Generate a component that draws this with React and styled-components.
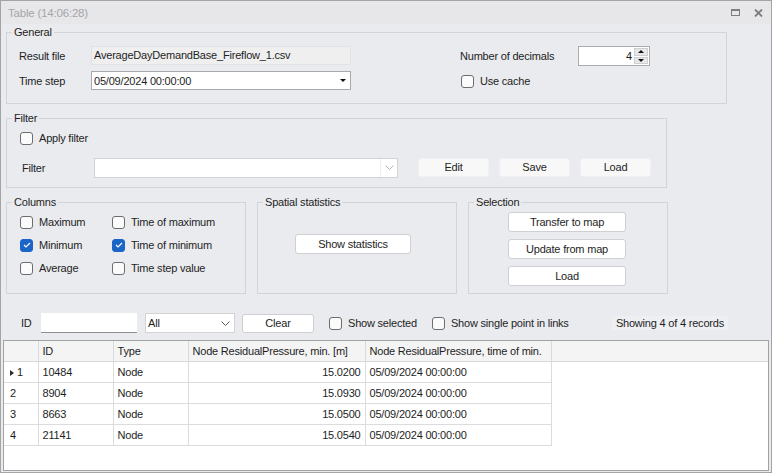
import React from 'react';
import styled, { createGlobalStyle } from 'styled-components';

const GlobalStyle = createGlobalStyle`
  body {
    margin: 0;
    background: #ffffff;
  }
  * {
    box-sizing: border-box;
  }
`;

const Window = styled.div`
  width: 772px;
  height: 473px;
  border: 1px solid #a4a4a7;
  background: #eaebef;
  display: flex;
  flex-direction: column;
  font-family: "Liberation Sans", Arial, sans-serif;
  font-size: 11px;
  letter-spacing: -0.2px;
  color: #1e1e1e;
  overflow: hidden;
`;

const TitleBar = styled.div`
  height: 23px;
  flex: none;
  display: flex;
  align-items: center;
  justify-content: space-between;
  padding: 0 8px 0 7px;
  background: #e7e7ea;
  color: #a5a5a8;
  font-size: 11.5px;
`;

const TitleIcons = styled.div`
  display: flex;
  align-items: center;
  gap: 14px;
`;

const Body = styled.div`
  display: flex;
  flex-direction: column;
  padding: 0 5px;
  margin-top: 1px;
`;

const Group = styled.fieldset`
  margin: 0;
  min-width: 0;
  border: 1px solid #d3d4d8;
  padding: ${p => p.$pt || 0}px 0 ${p => p.$pb || 0}px 0;
  width: ${p => p.$w}px;
  margin-top: ${p => p.$mt || 0}px;
  display: flex;
  flex-direction: column;
`;

const Legend = styled.legend`
  padding: 0 2px;
  margin-left: 5px;
  line-height: 14px;
  color: #1e1e1e;
`;

const GeneralContent = styled.div`
  display: flex;
  padding-left: 12px;
`;

const FieldGrid = styled.div`
  display: grid;
  grid-template-columns: ${p => p.$cols};
  grid-auto-rows: ${p => p.$rows};
  row-gap: ${p => p.$gap}px;
  align-items: center;
  margin-left: ${p => p.$ml || 0}px;
`;

const Label = styled.span`
  white-space: nowrap;
`;

const ReadField = styled.div`
  height: 19px;
  background: #efeff0;
  border: 1px solid #e2e2e4;
  padding-left: 2px;
  line-height: 17px;
`;

const Combo = styled.div`
  height: ${p => p.$h || 20}px;
  width: ${p => p.$w ? `${p.$w}px` : 'auto'};
  background: #ffffff;
  border: 1px solid ${p => p.$dark ? '#a9a9ac' : '#d3d3d6'};
  display: flex;
  align-items: center;
  justify-content: space-between;
  padding-left: 2px;
  margin-left: ${p => p.$ml || 0}px;
  margin-right: ${p => p.$mr || 0}px;
  flex: none;
`;

const ComboButton = styled.div`
  width: ${p => p.$w}px;
  align-self: stretch;
  display: flex;
  align-items: center;
  justify-content: center;
  border-left: ${p => p.$sep ? '1px solid #efeff1' : 'none'};
`;

const Spinner = styled.div`
  width: 72px;
  height: 20px;
  border: 1px solid #acacaf;
  background: #ffffff;
  display: flex;
`;

const SpinValue = styled.div`
  flex: 1;
  text-align: right;
  padding-right: 2px;
  line-height: 18px;
`;

const SpinButtons = styled.div`
  width: 14px;
  margin: 1px 1px 1px 0;
  display: flex;
  flex-direction: column;
  gap: 1px;
`;

const SpinHalf = styled.div`
  flex: 1;
  background: #e8e8ea;
  border: 1px solid #cfcfd2;
  display: flex;
  align-items: center;
  justify-content: center;
`;

const Arrow = styled.span`
  width: 0;
  height: 0;
  border-left: 3px solid transparent;
  border-right: 3px solid transparent;
  ${p => p.$up ? 'border-bottom: 3px solid #111;' : 'border-top: 3px solid #111;'}
`;

const CheckRow = styled.label`
  display: flex;
  align-items: center;
  gap: 6px;
  height: 16px;
  margin-left: ${p => p.$ml || 0}px;
  grid-column: ${p => p.$span ? '1 / -1' : 'auto'};
  white-space: nowrap;
`;

const Box = styled.span`
  width: 13px;
  height: 13px;
  flex: none;
  border-radius: 3px;
  border: 1px solid ${p => p.$checked ? '#1b64c8' : '#6d6d70'};
  background: ${p => p.$checked ? '#1b64c8' : '#fbfbfc'};
  display: inline-flex;
  align-items: center;
  justify-content: center;
`;

const FilterContent = styled.div`
  padding-left: 13px;
`;

const FilterRow = styled.div`
  display: flex;
  align-items: center;
  height: 21px;
  margin-top: 11px;
`;

const RowLabel = styled.span`
  width: ${p => p.$w}px;
  margin-left: ${p => p.$ml || 0}px;
  flex: none;
`;

const FlatButton = styled.div`
  width: 71px;
  height: 19px;
  margin-right: 10px;
  background: #f8f8f9;
  border: 1px solid #f1f1f3;
  border-radius: 3px;
  text-align: center;
  line-height: 17px;
`;

const Button = styled.div`
  width: ${p => p.$w}px;
  height: ${p => p.$h || 20}px;
  background: #ffffff;
  border: 1px solid #cfcfd3;
  border-radius: 3px;
  text-align: center;
  line-height: ${p => (p.$h || 20) - 2}px;
  margin-left: ${p => p.$ml || 0}px;
  flex: none;
`;

const GroupRow = styled.div`
  display: flex;
  gap: 11px;
  margin-top: 7px;
  align-items: stretch;
`;

const ChecksGrid = styled.div`
  display: grid;
  grid-template-columns: 92px auto;
  grid-auto-rows: 16px;
  row-gap: 7px;
  padding: 5px 0 0 13px;
`;

const StatsContent = styled.div`
  padding: 25px 0 0 37px;
`;

const SelectionContent = styled.div`
  display: flex;
  flex-direction: column;
  align-items: flex-start;
  gap: 7px;
  padding-left: 39px;
`;

const Toolbar = styled.div`
  display: flex;
  align-items: center;
  height: 20px;
  margin-top: 19px;
  padding-left: 15px;
`;

const IdInput = styled.div`
  width: 96px;
  height: 20px;
  background: #ffffff;
  border-bottom: 1px solid #8e8e91;
  flex: none;
`;

const Status = styled.div`
  margin-left: auto;
  margin-right: 38px;
  padding: 1px 4px;
  background: #eeeff2;
`;

const Grid = styled.div`
  flex: 1;
  margin: 7px 2px 1px 2px;
  border: 1px solid #a2a2a5;
  background: #ffffff;
  overflow: hidden;
`;

const Table = styled.table`
  width: 100%;
  border-collapse: collapse;
  table-layout: fixed;
`;

const Th = styled.th`
  height: 20px;
  padding: 0 4px;
  background: #f4f4f5;
  border-bottom: 1px solid #d9d9dc;
  border-right: ${p => p.$filler ? 'none' : '1px solid #d9d9dc'};
  font-weight: normal;
  text-align: left;
  white-space: nowrap;
  overflow: hidden;
`;

const Td = styled.td`
  height: 21px;
  padding: ${p => p.$ind ? '0 4px 0 6px' : '0 4px'};
  border-bottom: ${p => p.$filler ? 'none' : '1px solid #dcdcdf'};
  border-right: ${p => p.$filler ? 'none' : '1px solid #dcdcdf'};
  text-align: ${p => p.$right ? 'right' : 'left'};
  white-space: nowrap;
`;

const Pointer = styled.span`
  display: inline-block;
  width: 0;
  height: 0;
  border-top: 3.5px solid transparent;
  border-bottom: 3.5px solid transparent;
  border-left: 4px solid #2a2a2a;
  margin-right: 3px;
  vertical-align: -0.5px;
`;

const Checkbox = ({ checked, label, ml, span }) => (
  <CheckRow $ml={ml} $span={span}>
    <Box $checked={checked}>
      {checked && (
        <svg width="8" height="6" viewBox="0 0 8 6">
          <polyline points="1,3 3,5 7,1" fill="none" stroke="#ffffff" strokeWidth="1.2" />
        </svg>
      )}
    </Box>
    {label}
  </CheckRow>
);

const Chevron = ({ color = '#9a9a9d' }) => (
  <svg width="9" height="5" viewBox="0 0 9 5">
    <polyline points="0.5,0.5 4.5,4.5 8.5,0.5" fill="none" stroke={color} strokeWidth="1" />
  </svg>
);

const rows = [
  { n: 1, id: '10484', v: '15.0200' },
  { n: 2, id: '8904', v: '15.0930' },
  { n: 3, id: '8663', v: '15.0500' },
  { n: 4, id: '21141', v: '15.0540' },
];

export default function App() {
  return (
    <>
      <GlobalStyle />
      <Window>
        <TitleBar>
          <span>Table (14:06:28)</span>
          <TitleIcons>
            <svg width="9" height="7" viewBox="0 0 9 7">
              <rect x="0.5" y="1" width="8" height="5.5" fill="none" stroke="#7d7d80" strokeWidth="1" />
              <rect x="0" y="0" width="9" height="2" fill="#7d7d80" />
            </svg>
            <svg width="9" height="8" viewBox="0 0 9 8">
              <path d="M1 0.5 L8 7.5 M8 0.5 L1 7.5" stroke="#7d7d80" strokeWidth="1.8" />
            </svg>
          </TitleIcons>
        </TitleBar>

        <Body>
          <Group $w={721} $pt={7} $pb={12}>
            <Legend>General</Legend>
            <GeneralContent>
              <FieldGrid $cols="72px 260px" $rows="19px" $gap={6}>
                <Label>Result file</Label>
                <ReadField>AverageDayDemandBase_Fireflow_1.csv</ReadField>
                <Label>Time step</Label>
                <Combo $h={19} $dark>
                  05/09/2024 00:00:00
                  <ComboButton $w={14}>
                    <Arrow />
                  </ComboButton>
                </Combo>
              </FieldGrid>
              <FieldGrid $cols="118px 72px" $rows="20px" $gap={5} $ml={109}>
                <Label>Number of decimals</Label>
                <Spinner>
                  <SpinValue>4</SpinValue>
                  <SpinButtons>
                    <SpinHalf><Arrow $up /></SpinHalf>
                    <SpinHalf><Arrow /></SpinHalf>
                  </SpinButtons>
                </Spinner>
                <Checkbox label="Use cache" ml={1} span />
              </FieldGrid>
            </GeneralContent>
          </Group>

          <Group $w={661} $pt={5} $pb={9} $mt={7}>
            <Legend>Filter</Legend>
            <FilterContent>
              <Checkbox label="Apply filter" />
              <FilterRow>
                <RowLabel $w={72} $ml={2}>Filter</RowLabel>
                <Combo $w={304} $mr={20}>
                  <span />
                  <ComboButton $w={17} $sep>
                    <Chevron color="#b5b5b8" />
                  </ComboButton>
                </Combo>
                <FlatButton>Edit</FlatButton>
                <FlatButton>Save</FlatButton>
                <FlatButton>Load</FlatButton>
              </FilterRow>
            </FilterContent>
          </Group>

          <GroupRow>
            <Group $w={240}>
              <Legend>Columns</Legend>
              <ChecksGrid>
                <Checkbox label="Maximum" />
                <Checkbox label="Time of maximum" />
                <Checkbox label="Minimum" checked />
                <Checkbox label="Time of minimum" checked />
                <Checkbox label="Average" />
                <Checkbox label="Time step value" />
              </ChecksGrid>
            </Group>
            <Group $w={200}>
              <Legend>Spatial statistics</Legend>
              <StatsContent>
                <Button $w={116}>Show statistics</Button>
              </StatsContent>
            </Group>
            <Group $w={200} $pt={3} $pb={7}>
              <Legend>Selection</Legend>
              <SelectionContent>
                <Button $w={118}>Transfer to map</Button>
                <Button $w={118}>Update from map</Button>
                <Button $w={118}>Load</Button>
              </SelectionContent>
            </Group>
          </GroupRow>

          <Toolbar>
            <RowLabel $w={20}>ID</RowLabel>
            <IdInput />
            <Combo $w={90} $ml={8}>
              All
              <ComboButton $w={17}>
                <Chevron color="#5a5a5d" />
              </ComboButton>
            </Combo>
            <Button $w={72} $h={19} $ml={7}>Clear</Button>
            <Checkbox label="Show selected" ml={15} />
            <Checkbox label="Show single point in links" ml={15} />
            <Status>Showing 4 of 4 records</Status>
          </Toolbar>
        </Body>

        <Grid>
          <Table>
            <colgroup>
              <col style={{ width: 34 }} />
              <col style={{ width: 75 }} />
              <col style={{ width: 75 }} />
              <col style={{ width: 177 }} />
              <col style={{ width: 186 }} />
              <col />
            </colgroup>
            <thead>
              <tr>
                <Th />
                <Th>ID</Th>
                <Th>Type</Th>
                <Th>Node ResidualPressure, min. [m]</Th>
                <Th>Node ResidualPressure, time of min.</Th>
                <Th $filler />
              </tr>
            </thead>
            <tbody>
              {rows.map(r => (
                <tr key={r.n}>
                  <Td $ind>
                    {r.n === 1 && <Pointer />}
                    {r.n}
                  </Td>
                  <Td>{r.id}</Td>
                  <Td>Node</Td>
                  <Td $right>{r.v}</Td>
                  <Td>05/09/2024 00:00:00</Td>
                  <Td $filler />
                </tr>
              ))}
            </tbody>
          </Table>
        </Grid>
      </Window>
    </>
  );
}
